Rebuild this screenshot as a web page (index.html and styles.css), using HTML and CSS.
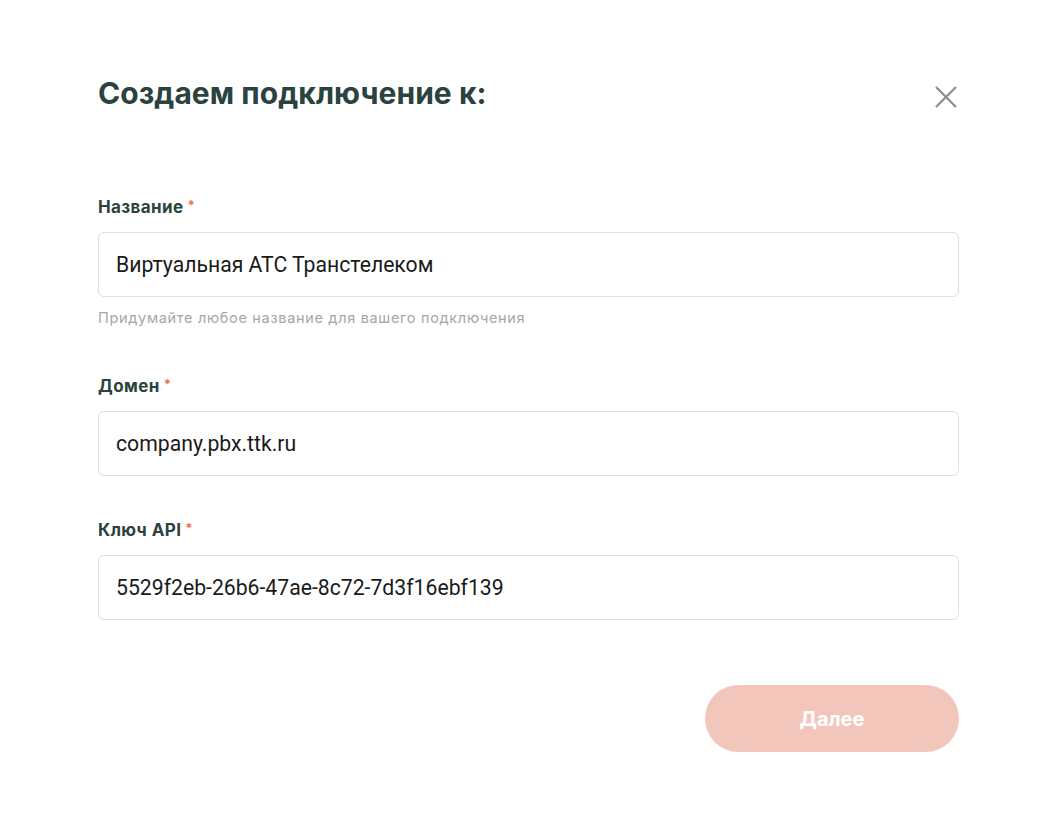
FILE: index.html
```html
<!DOCTYPE html>
<html lang="ru">
<head>
<meta charset="utf-8">
<title>Создаем подключение</title>
<link rel="stylesheet" href="styles.css">
</head>
<body>
<div class="modal">
  <div class="header">
    <h1 class="title">Создаем подключение к:</h1>
    <button class="close" aria-label="Закрыть">
      <svg width="22" height="22" viewBox="0 0 22 22"><path d="M1 1L21 21M21 1L1 21" stroke="#8c8c8c" stroke-width="2.2" fill="none"/></svg>
    </button>
  </div>
  <div class="field">
    <div class="label">Название<span class="req">*</span></div>
    <div class="input">Виртуальная АТС Транстелеком</div>
    <div class="hint">Придумайте любое название для вашего подключения</div>
  </div>
  <div class="field">
    <div class="label">Домен<span class="req">*</span></div>
    <div class="input">company.pbx.ttk.ru</div>
  </div>
  <div class="field">
    <div class="label">Ключ API<span class="req">*</span></div>
    <div class="input">5529f2eb-26b6-47ae-8c72-7d3f16ebf139</div>
  </div>
  <div class="actions">
    <button class="next">Далее</button>
  </div>
</div>
</body>
</html>
```
FILE: styles.css
```css
* { box-sizing: border-box; }
html, body { margin: 0; background: #fff; }
body { font-family: "Inter", "Noto Sans", sans-serif; }
.modal {
  width: 861px;
  margin-left: 98px;
  padding-top: 75px;
}
.header {
  display: flex;
  justify-content: space-between;
  align-items: flex-start;
}
.title {
  margin: 0;
  font-size: 30px;
  line-height: 36px;
  font-weight: 700;
  color: #2a433e;
  letter-spacing: 0.05px;
}
.close {
  border: 0;
  background: none;
  padding: 0;
  margin-top: 11px;
  margin-right: 2px;
  width: 22px;
  height: 22px;
  display: flex;
  cursor: pointer;
}
.field { margin-bottom: 42px; }
.header + .field { margin-top: 84px; }
.label {
  font-size: 17px;
  line-height: 20px;
  height: 22px;
  padding-top: 2px;
  font-weight: 700;
  color: #2a433e;
  letter-spacing: 0.4px;
  margin-bottom: 15px;
}
.req {
  color: #e8734f;
  font-size: 13px;
  line-height: 1;
  margin-left: 4px;
  position: relative;
  top: -3px;
}
.input {
  height: 65px;
  border: 1px solid #dedede;
  border-radius: 6px;
  padding: 0 17px;
  display: flex;
  align-items: center;
  font-family: "Roboto", sans-serif;
  font-size: 21.2px;
  color: #1a1a1a;
}
.hint {
  margin-top: 12px;
  padding-bottom: 5px;
  font-size: 14.5px;
  line-height: 18px;
  letter-spacing: 0.68px;
  color: #a6a6a6;
}
.actions {
  display: flex;
  justify-content: flex-end;
  margin-top: 65px;
}
.next {
  width: 254px;
  height: 67px;
  border: 0;
  border-radius: 34px;
  background: #f3c6bb;
  color: #fff;
  font-family: "Inter", sans-serif;
  font-weight: 700;
  font-size: 20px;
}
```
